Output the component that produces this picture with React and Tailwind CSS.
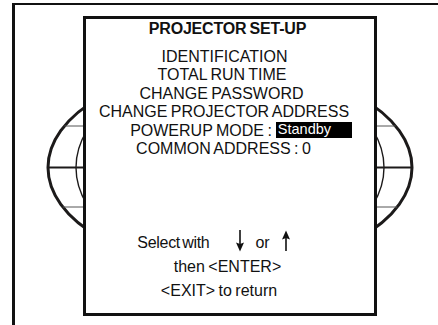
import React from 'react';

const DownArrow = () => (
    <svg width="10" height="22" viewBox="0 0 10 22" className="mt-[-1px] shrink-0">
        <line x1="5" y1="0" x2="5" y2="14" stroke="#111" strokeWidth="1.6" />
        <path d="M1 12.5 L5 21.5 L9 12.5 L5 14 Z" fill="#111" />
    </svg>
);

const UpArrow = () => (
    <svg width="10" height="22" viewBox="0 0 10 22" className="mt-[-1px] shrink-0">
        <line x1="5" y1="8" x2="5" y2="21" stroke="#111" strokeWidth="1.6" />
        <path d="M1 9.5 L5 0.5 L9 9.5 L5 8 Z" fill="#111" />
    </svg>
);

// globe drawn behind the menu box
const Globe = () => (
    <svg width="423" height="320" viewBox="0 0 423 320" className="[grid-area:1/1] self-start justify-self-start">
        <ellipse cx="215" cy="162.5" rx="182" ry="100" fill="none" stroke="#1c1a1a" strokeWidth="3" />
        <ellipse cx="215" cy="162.5" rx="154" ry="100" fill="none" stroke="#1c1a1a" strokeWidth="1.4" />
        <line x1="49.4" y1="121" x2="380.6" y2="121" stroke="#555" strokeWidth="1" />
        <line x1="33" y1="162.5" x2="397" y2="162.5" stroke="#1c1a1a" strokeWidth="2" />
        <line x1="47.8" y1="202" x2="382.2" y2="202" stroke="#555" strokeWidth="1" />
    </svg>
);

const App = () => {
    return (
        <div className="w-[438px] h-[325px] overflow-hidden bg-white pt-[3px] pl-[12px] font-['Liberation_Sans',Arial,sans-serif] text-[#111] [word-spacing:-1px]">
            <div className="h-[322px] grid border-t-2 border-l-[3px] border-[#111]">
                <Globe />

                <div className="[grid-area:1/1] self-start justify-self-start ml-[68px] mt-[11px] w-[294px] h-[300px] border-[3px] border-[#111] bg-white flex flex-col">
                    <h1 className="h-[20px] leading-[20px] text-[16px] font-bold text-center pr-[5px] tracking-[-0.2px]">PROJECTOR SET-UP</h1>

                    {/* menu items */}
                    <div className="mt-[9px] flex flex-col text-[16px] leading-[18.4px] text-center">
                        <div className="pr-[11px]">IDENTIFICATION</div>
                        <div className="pr-[16px]">TOTAL RUN TIME</div>
                        <div className="pr-[17px]">CHANGE PASSWORD</div>
                        <div className="pr-[12px]">CHANGE PROJECTOR ADDRESS</div>
                        <div className="pl-[22px] flex justify-center items-center">
                            <span>POWERUP MODE :</span>
                            <span className="ml-[4px] w-[76px] h-[16px] bg-black text-white text-[14.5px] leading-[14px] pl-[2px] text-left self-start mt-[0.5px]">Standby</span>
                        </div>
                        <div className="pr-[13px]">COMMON ADDRESS : 0</div>
                    </div>

                    {/* footer help */}
                    <div className="mt-[73px] flex flex-col text-[16px] leading-[24px]">
                        <div className="flex justify-center items-start pr-[32px]">
                            <span className="tracking-[-0.3px] [word-spacing:-2px]">Select with</span>
                            <span className="ml-[26px] flex"><DownArrow /></span>
                            <span className="ml-[10px]">or</span>
                            <span className="ml-[11px] flex"><UpArrow /></span>
                        </div>
                        <div className="text-center pr-[5px]">then &lt;ENTER&gt;</div>
                        <div className="text-center pr-[22px]">&lt;EXIT&gt; to return</div>
                    </div>
                </div>
            </div>
        </div>
    );
};

export default App;
